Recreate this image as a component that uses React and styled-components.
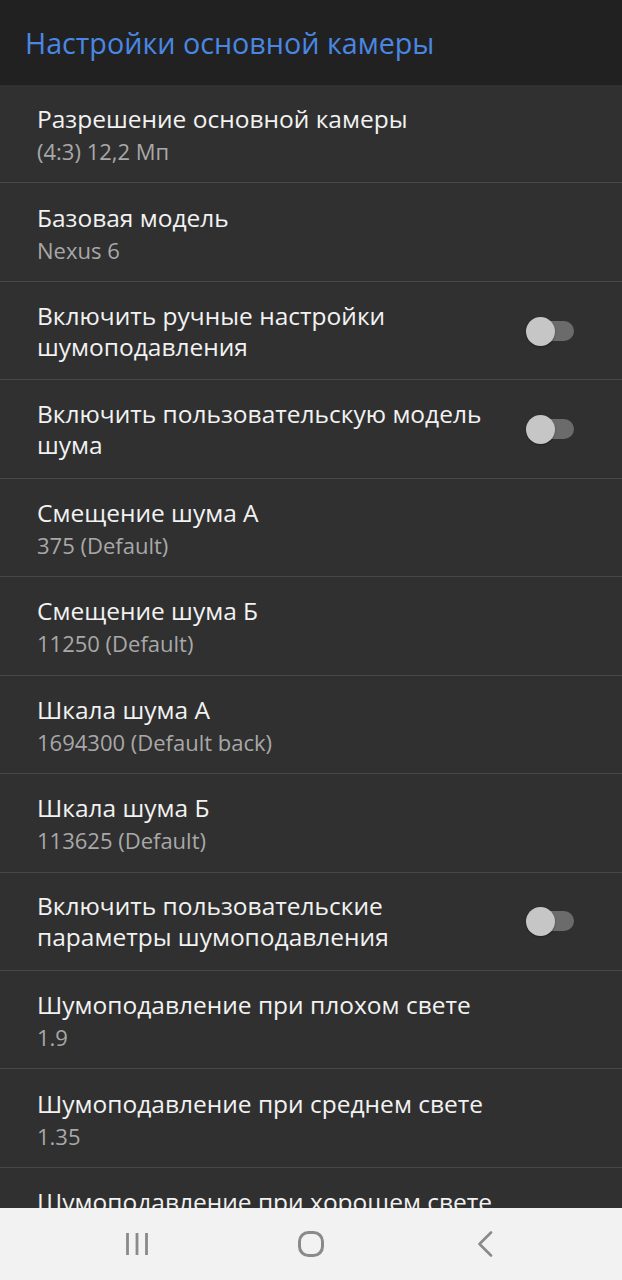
import React from "react";
import styled, { createGlobalStyle } from "styled-components";

const Global = createGlobalStyle`
  html, body { margin: 0; padding: 0; background: #303030; }
  body { font-family: "Open Sans", "Noto Sans", sans-serif; }
`;

const Screen = styled.div`
  width: 622px;
  height: 1280px;
  display: flex;
  flex-direction: column;
  background: #303030;
  overflow: hidden;
`;

const Header = styled.header`
  height: 85px;
  flex: none;
  background: #212121;
  display: flex;
  align-items: center;
  padding: 0 25px;
  box-sizing: border-box;
`;

const HeaderTitle = styled.h1`
  margin: 0;
  font-size: 28.7px;
  font-weight: 400;
  color: #4a87e2;
  letter-spacing: 0;
  white-space: nowrap;
`;

const List = styled.div`
  flex: 1;
  overflow: hidden;
  display: flex;
  flex-direction: column;
`;

const Row = styled.div`
  flex: none;
  height: 98.45px;
  box-sizing: border-box;
  border-bottom: 1.5px solid #474747;
  display: flex;
  align-items: center;
  padding: ${(p) => (p.$withSummary ? "4px" : "0")} 48px 0 37px;
  gap: 30px;
`;

const TextCol = styled.div`
  flex: 1;
  display: flex;
  flex-direction: column;
`;

const Title = styled.div`
  font-size: 24.5px;
  line-height: 31px;
  color: #f2f2f2;
  white-space: ${(p) => (p.$nowrap ? "nowrap" : "normal")};
`;

const Summary = styled.div`
  font-size: 22px;
  line-height: 34px;
  color: #a8a8a8;
`;

const Switch = styled.div`
  position: relative;
  flex: none;
  width: 48px;
  height: 30px;
`;

const Track = styled.div`
  position: absolute;
  right: 0;
  top: 5px;
  width: 36px;
  height: 20px;
  border-radius: 10px;
  background: #6b6b6b;
`;

const Thumb = styled.div`
  position: absolute;
  left: 0;
  top: 1px;
  width: 29px;
  height: 29px;
  border-radius: 50%;
  background: #c6c6c6;
  box-shadow: 0 1px 2px rgba(0, 0, 0, 0.35);
`;

const NavBar = styled.nav`
  flex: none;
  height: 72px;
  background: #f2f2f2;
  display: grid;
  grid-template-columns: 1fr 1fr 1fr;
  align-items: center;
  justify-items: center;
  padding: 0 50px;
  box-sizing: border-box;
`;

const NavIcon = styled.svg`
  display: block;
`;

const items = [
  { title: "Разрешение основной камеры", summary: "(4:3) 12,2 Мп" },
  { title: "Базовая модель", summary: "Nexus 6" },
  { title: "Включить ручные настройки шумоподавления", toggle: true },
  { title: "Включить пользовательскую модель шума", toggle: true },
  { title: "Смещение шума А", summary: "375 (Default)" },
  { title: "Смещение шума Б", summary: "11250 (Default)" },
  { title: "Шкала шума А", summary: "1694300 (Default back)" },
  { title: "Шкала шума Б", summary: "113625 (Default)" },
  { title: "Включить пользовательские параметры шумоподавления", toggle: true },
  { title: "Шумоподавление при плохом свете", summary: "1.9" },
  { title: "Шумоподавление при среднем свете", summary: "1.35" },
  { title: "Шумоподавление при хорошем свете", summary: "1.0" },
];

export default function App() {
  return (
    <Screen>
      <Global />
      <Header>
        <HeaderTitle>Настройки основной камеры</HeaderTitle>
      </Header>
      <List>
        {items.map((it, i) => (
          <Row key={i} $withSummary={!!it.summary}>
            <TextCol>
              <Title $nowrap={!it.toggle}>{it.title}</Title>
              {it.summary && <Summary>{it.summary}</Summary>}
            </TextCol>
            {it.toggle && (
              <Switch>
                <Track />
                <Thumb />
              </Switch>
            )}
          </Row>
        ))}
      </List>
      <NavBar>
        <NavIcon width="24" height="24" viewBox="0 0 24 24">
          <g stroke="#8a8a8a" strokeWidth="2.8">
            <line x1="2.5" y1="1" x2="2.5" y2="23" />
            <line x1="12" y1="1" x2="12" y2="23" />
            <line x1="21.5" y1="1" x2="21.5" y2="23" />
          </g>
        </NavIcon>
        <NavIcon width="26" height="26" viewBox="0 0 26 26">
          <rect x="1.5" y="1.5" width="23" height="23" rx="9" fill="none" stroke="#8a8a8a" strokeWidth="3" />
        </NavIcon>
        <NavIcon width="26" height="26" viewBox="0 0 26 26">
          <polyline points="19,1.5 7.5,13 19,24.5" fill="none" stroke="#8a8a8a" strokeWidth="2.6" strokeLinecap="round" strokeLinejoin="round" />
        </NavIcon>
      </NavBar>
    </Screen>
  );
}
